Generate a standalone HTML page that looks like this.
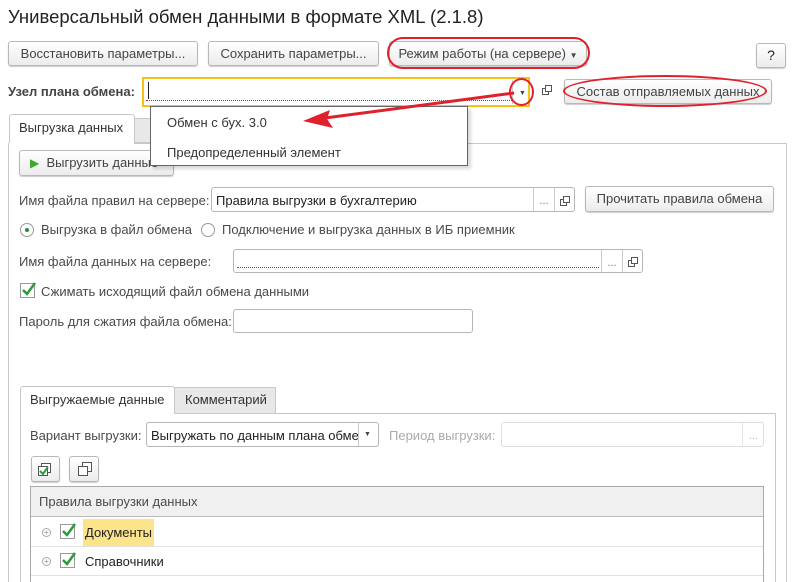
<!DOCTYPE html>
<html><head><meta charset="utf-8"><style>
*{box-sizing:border-box;margin:0;padding:0}
html,body{width:794px;height:582px;overflow:hidden}
body{background:#fff;font-family:"Liberation Sans",Arial,sans-serif;font-size:13px;color:#333;position:relative}
.a{position:absolute}
.btn{position:absolute;border:1px solid #b8b8b8;border-radius:3px;background:linear-gradient(#fff,#ececec);box-shadow:0 1px 1px rgba(0,0,0,.2);text-align:center;color:#444;white-space:nowrap}
.inp{position:absolute;border:1px solid #b5b5b5;border-radius:3px;background:#fff}
.t{position:absolute;white-space:nowrap;color:#4a4a4a}
.sep{position:absolute;top:0;bottom:0;border-left:1px solid #ccc}
.dots{position:absolute;top:0;bottom:0;text-align:center;color:#777;font-size:11px}
.cp{position:absolute;width:7px;height:7px;border:1px solid #555;background:#fff}
</style></head><body>
<div class="t" style="left:8px;top:6px;font-size:18.5px;color:#222">Универсальный обмен данными в формате XML (2.1.8)</div>

<div class="btn" style="left:8px;top:41px;width:190px;height:25px;line-height:23px">Восстановить параметры...</div>
<div class="btn" style="left:208px;top:41px;width:171px;height:25px;line-height:23px">Сохранить параметры...</div>
<div class="btn" style="left:389px;top:41px;width:198px;height:25px;line-height:23px">Режим работы (на сервере) <span style="font-size:8px">▼</span></div>
<div class="a" style="left:387px;top:37px;width:203px;height:32px;border:2px solid #e0202a;border-radius:16px"></div>
<div class="btn" style="left:756px;top:43px;width:30px;height:25px;line-height:23px;font-size:14px;color:#222">?</div>

<div class="t" style="left:8px;top:84px;font-weight:bold;color:#444">Узел плана обмена:</div>
<div class="a" style="left:142px;top:77px;width:388px;height:30px;border:2px solid #f5c21a;background:#fff"></div>
<div class="a" style="left:148px;top:82px;width:1px;height:17px;background:#222"></div>
<div class="a" style="left:146px;top:100px;width:366px;border-top:1px dotted #e02020"></div>
<div class="a" style="left:512px;top:80px;height:24px;border-left:1px solid #ccc"></div>
<div class="a" style="left:519px;top:90px;font-size:7px;color:#444">▼</div>
<div class="a" style="left:509px;top:78px;width:25px;height:28px;border:2px solid #e0202a;border-radius:50%"></div>
<div class="cp" style="left:542px;top:88px"></div><div class="cp" style="left:545px;top:85px"></div>

<div class="btn" style="left:564px;top:79px;width:208px;height:25px;line-height:23px">Состав отправляемых данных</div>
<div class="a" style="left:563px;top:75px;width:204px;height:32px;border:2px solid #e0202a;border-radius:50%"></div>

<div class="a" style="left:134px;top:118px;width:20px;height:25px;border:1px solid #c8c8c8;background:#e8e8e8"></div>
<div class="a" style="left:9px;top:114px;width:126px;height:30px;border:1px solid #c8c8c8;border-bottom:none;border-radius:3px 3px 0 0;background:#fff"></div>
<div class="t" style="left:19px;top:120px;font-size:13px;color:#333">Выгрузка данных</div>
<div class="a" style="left:8px;top:143px;width:779px;height:460px;border:1px solid #c8c8c8"></div>
<div class="a" style="left:9px;top:143px;width:125px;height:2px;background:#fff"></div>

<div class="btn" style="left:19px;top:150px;width:155px;height:26px;line-height:24px;text-align:left;padding-left:10px"><span style="color:#3cab2a;font-size:12px">▶</span>&nbsp; Выгрузить данные</div>

<div class="t" style="left:19px;top:193px">Имя файла правил на сервере:</div>
<div class="inp" style="left:211px;top:187px;width:364px;height:25px">
 <div class="t" style="left:4px;top:5px;color:#222">Правила выгрузки в бухгалтерию</div>
 <div class="sep" style="left:321px"></div><div class="dots" style="left:322px;width:20px;line-height:27px">...</div>
 <div class="sep" style="left:342px"></div><div class="cp" style="left:348px;top:11px"></div><div class="cp" style="left:351px;top:8px"></div>
</div>
<div class="btn" style="left:585px;top:186px;width:189px;height:26px;line-height:24px">Прочитать правила обмена</div>

<div class="a" style="left:20px;top:223px;width:14px;height:14px;border:1px solid #999;border-radius:50%"><div class="a" style="left:4px;top:4px;width:4px;height:4px;border-radius:50%;background:#2a8a3a"></div></div>
<div class="t" style="left:41px;top:222px">Выгрузка в файл обмена</div>
<div class="a" style="left:201px;top:223px;width:14px;height:14px;border:1px solid #999;border-radius:50%"></div>
<div class="t" style="left:222px;top:222px">Подключение и выгрузка данных в ИБ приемник</div>

<div class="t" style="left:19px;top:254px">Имя файла данных на сервере:</div>
<div class="inp" style="left:233px;top:249px;width:410px;height:24px">
 <div class="a" style="left:3px;top:17px;width:362px;border-top:1px dotted #e02020"></div>
 <div class="sep" style="left:367px"></div><div class="dots" style="left:368px;width:20px;line-height:26px">...</div>
 <div class="sep" style="left:388px"></div><div class="cp" style="left:394px;top:10px"></div><div class="cp" style="left:397px;top:7px"></div>
</div>

<div class="a" style="left:20px;top:283px;width:15px;height:15px;border:1px solid #999;background:#fff"></div>
<svg class="a" style="left:20px;top:280px" width="18" height="18"><path d="M3 10 L7 14 L15 3" stroke="#2a9a3a" stroke-width="2.5" fill="none"/></svg>
<div class="t" style="left:41px;top:284px">Сжимать исходящий файл обмена данными</div>

<div class="t" style="left:19px;top:314px">Пароль для сжатия файла обмена:</div>
<div class="inp" style="left:233px;top:309px;width:240px;height:24px"></div>

<div class="a" style="left:174px;top:387px;width:102px;height:27px;border:1px solid #c8c8c8;background:#e8e8e8"></div>
<div class="t" style="left:185px;top:392px;color:#333">Комментарий</div>
<div class="a" style="left:20px;top:386px;width:155px;height:28px;border:1px solid #c8c8c8;border-bottom:none;border-radius:3px 3px 0 0;background:#fff"></div>
<div class="t" style="left:30px;top:392px;color:#333">Выгружаемые данные</div>
<div class="a" style="left:20px;top:413px;width:756px;height:190px;border:1px solid #c8c8c8"></div>
<div class="a" style="left:21px;top:413px;width:153px;height:2px;background:#fff"></div>

<div class="t" style="left:30px;top:428px">Вариант выгрузки:</div>
<div class="inp" style="left:146px;top:422px;width:233px;height:25px;overflow:hidden">
 <div class="t" style="left:4px;top:5px;color:#222">Выгружать по данным плана обме</div>
 <div class="sep" style="left:211px;background:#fff"></div><div class="a" style="left:217px;top:8px;font-size:7px;color:#444">▼</div>
</div>
<div class="t" style="left:389px;top:428px;color:#aaa">Период выгрузки:</div>
<div class="inp" style="left:501px;top:422px;width:263px;height:25px;border-color:#ddd">
 <div class="sep" style="left:240px;border-color:#e4e4e4"></div><div class="dots" style="left:241px;width:21px;line-height:26px;color:#bbb">...</div>
</div>

<div class="btn" style="left:31px;top:456px;width:29px;height:26px"></div>
<div class="a" style="left:41px;top:463px;width:10px;height:10px;border:1px solid #555;background:#fff"></div>
<div class="a" style="left:38px;top:466px;width:10px;height:10px;border:1px solid #555;background:#fff"></div>
<svg class="a" style="left:38px;top:465px" width="12" height="12"><path d="M2 6 L5 9 L10 2" stroke="#2a9a3a" stroke-width="2" fill="none"/></svg>
<div class="btn" style="left:69px;top:456px;width:30px;height:26px"></div>
<div class="a" style="left:82px;top:462px;width:10px;height:10px;border:1px solid #555;background:#fff"></div>
<div class="a" style="left:78px;top:466px;width:10px;height:10px;border:1px solid #555;background:#fff"></div>

<div class="a" style="left:30px;top:486px;width:734px;height:120px;border:1px solid #aaa"></div>
<div class="a" style="left:31px;top:487px;width:732px;height:30px;background:#f0f0f0;border-bottom:1px solid #bbb"></div>
<div class="t" style="left:39px;top:494px">Правила выгрузки данных</div>
<div class="a" style="left:31px;top:546px;width:732px;border-top:1px solid #e2e2e2"></div>
<div class="a" style="left:31px;top:575px;width:732px;border-top:1px solid #e2e2e2"></div>

<div class="a" style="left:42px;top:528px;width:9px;height:9px;border:1px solid #aaa;border-radius:50%;font-size:8px;line-height:7px;text-align:center;color:#888">+</div>
<div class="a" style="left:60px;top:524px;width:15px;height:15px;border:1px solid #999"></div>
<svg class="a" style="left:60px;top:521px" width="18" height="18"><path d="M3 10 L7 14 L15 3" stroke="#2a9a3a" stroke-width="2.5" fill="none"/></svg>
<div class="a" style="left:83px;top:519px;width:71px;height:27px;background:#fbe48a"></div>
<div class="t" style="left:85px;top:525px;color:#222">Документы</div>

<div class="a" style="left:42px;top:557px;width:9px;height:9px;border:1px solid #aaa;border-radius:50%;font-size:8px;line-height:7px;text-align:center;color:#888">+</div>
<div class="a" style="left:60px;top:553px;width:15px;height:15px;border:1px solid #999"></div>
<svg class="a" style="left:60px;top:550px" width="18" height="18"><path d="M3 10 L7 14 L15 3" stroke="#2a9a3a" stroke-width="2.5" fill="none"/></svg>
<div class="t" style="left:85px;top:554px;color:#222">Справочники</div>

<div class="a" style="left:150px;top:106px;width:318px;height:60px;border:1px solid #666;background:#fff;box-shadow:3px 3px 3px rgba(0,0,0,.15)"></div>
<div class="t" style="left:167px;top:115px;color:#333">Обмен с бух. 3.0</div>
<div class="t" style="left:167px;top:145px;color:#333">Предопределенный элемент</div>

<svg class="a" style="left:0;top:0" width="794" height="582">
<line x1="514" y1="93" x2="325" y2="118" stroke="#e0202a" stroke-width="3"/>
<path d="M303 121 L330 110 L327 119 L333 128 Z" fill="#e0202a"/>
</svg>
</body></html>
